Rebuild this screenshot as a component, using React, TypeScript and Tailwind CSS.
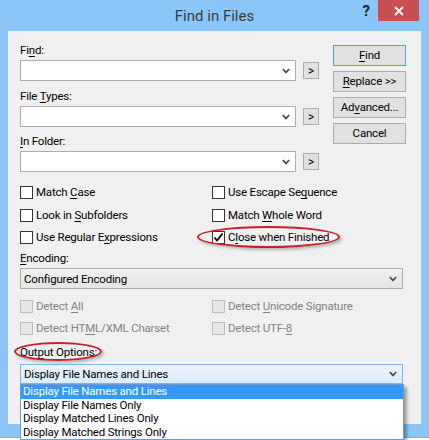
import React from "react";

function M({ t, k }: { t: string; k: number }) {
  if (k < 0) return <>{t}</>;
  return (
    <>
      {t.slice(0, k)}
      <span className="underline underline-offset-[2px] decoration-[1px]">{t[k]}</span>
      {t.slice(k + 1)}
    </>
  );
}

function Chevron() {
  return (
    <svg width="8" height="6" viewBox="0 0 8 6" className="shrink-0">
      <path d="M0.8 1 L4 4.4 L7.2 1" fill="none" stroke="#4a4a4a" strokeWidth="1.7" />
    </svg>
  );
}

function Combo({ w, children, variant = "edit", h = "h-[21px]" }: { w: string; children?: React.ReactNode; variant?: "edit" | "ro" | "focus"; h?: string }) {
  const cls =
    variant === "edit"
      ? "bg-white border-[#abadb3]"
      : variant === "ro"
      ? "bg-gradient-to-b from-[#f0f0f0] to-[#e5e5e5] border-[#acacac]"
      : "bg-gradient-to-b from-[#ecf4fc] to-[#dcecfc] border-[#7eb4ea]";
  return (
    <div className={`${w} ${h} border ${cls} flex items-center pl-[3px] pr-[5px]`}>
      <div className="flex-1 leading-[14px] whitespace-nowrap">{children}</div>
      <Chevron />
    </div>
  );
}

function Arrow() {
  return (
    <div className="ml-[7px] w-[16px] h-[17px] bg-[#e1e1e1] border border-[#adadad] flex items-center justify-center leading-none text-[12px]">
      &gt;
    </div>
  );
}

function Btn({ children, def }: { children: React.ReactNode; def?: boolean }) {
  return (
    <div
      className={`w-[73px] h-[21px] flex items-center justify-center bg-[#e1e1e1] border ${
        def ? "border-[#569de5]" : "border-[#adadad]"
      } whitespace-nowrap`}
    >
      {children}
    </div>
  );
}

function Check({ children, checked, disabled }: { children: React.ReactNode; checked?: boolean; disabled?: boolean }) {
  return (
    <div className="flex items-center">
      <div
        className={`w-[13px] h-[13px] border flex items-center justify-center ${
          disabled ? "bg-[#e6e6e6] border-[#bcbcbc]" : "bg-white border-[#333333]"
        }`}
      >
        {checked && (
          <svg width="11" height="11" viewBox="0 0 11 11">
            <path d="M1.5 5.5 L4 8.5 L9.5 1.5" fill="none" stroke="#000" strokeWidth="1.8" />
          </svg>
        )}
      </div>
      <span className={`ml-[3px] whitespace-nowrap ${disabled ? "text-[#838383]" : "text-black"}`}>{children}</span>
    </div>
  );
}

export default function App() {
  return (
    <div className="w-[429px] h-[440px] bg-white text-[11.5px] tracking-[-0.2px] text-black [font-family:Roboto,'Liberation_Sans',sans-serif] leading-[15px]">
      <div className="h-[438px] bg-[#8cc6f8] border-b border-[#6fb0ec] flex flex-col">
        {/* title bar */}
        <div className="h-[31px] grid grid-cols-[1fr_auto_1fr] tracking-normal">
          <div />
          <div className="pt-[7px] text-[15px] leading-[18px] text-[#3a3a3a]">Find in Files</div>
          <div className="flex justify-end items-start pr-[10px]">
            <div className="mt-[2px] mr-[8px] text-[15px] leading-[18px] font-bold text-[#222]">?</div>
            <div className="w-[41px] h-[21px] bg-[#c75050] flex items-center justify-center">
              <svg width="10" height="10" viewBox="0 0 10 10">
                <path d="M1 1 L9 9 M9 1 L1 9" stroke="#fff" strokeWidth="1.8" />
              </svg>
            </div>
          </div>
        </div>

        {/* client */}
        <div className="mx-[8px] h-[393px] bg-[#f0f0f0] flex flex-col">
          <div className="flex pl-[12px] pt-[12px]">
            <div className="w-[299px] flex flex-col">
              <div className="h-[15px]"><M t="Find:" k={2} /></div>
              <div className="mt-[2px] flex items-center">
                <Combo w="w-[276px]" />
                <Arrow />
              </div>
              <div className="mt-[8px] h-[15px]"><M t="File Types:" k={5} /></div>
              <div className="mt-[2px] flex items-center">
                <Combo w="w-[276px]" />
                <Arrow />
              </div>
              <div className="mt-[7px] h-[15px]"><M t="In Folder:" k={0} /></div>
              <div className="mt-[2px] flex items-center">
                <Combo w="w-[276px]" />
                <Arrow />
              </div>
            </div>
            <div className="ml-[14px] mt-[2px] flex flex-col gap-[5px]">
              <Btn def><M t="Find" k={0} /></Btn>
              <Btn><M t="Replace >>" k={0} /></Btn>
              <Btn><M t="Advanced..." k={2} /></Btn>
              <Btn>Cancel</Btn>
            </div>
          </div>

          <div className="pl-[12px] mt-[9px] grid grid-cols-[192px_1fr]">
            <div className="h-[23px] flex items-center"><Check><M t="Match Case" k={6} /></Check></div>
            <div className="h-[23px] flex items-center"><Check><M t="Use Escape Sequence" k={13} /></Check></div>
            <div className="h-[22px] flex items-center"><Check><M t="Look in Subfolders" k={8} /></Check></div>
            <div className="h-[22px] flex items-center"><Check><M t="Match Whole Word" k={6} /></Check></div>
            <div className="h-[22px] flex items-center"><Check><M t="Use Regular Expressions" k={13} /></Check></div>
            <div className="h-[22px] flex items-center">
              <div className="relative">
                <Check checked><M t="Close when Finished" k={1} /></Check>
                <div className="absolute left-[-15px] top-[-4px] w-[143px] h-[22px] rounded-[50%] border-2 border-[#c4232b] shadow-[2px_2px_3px_rgba(0,0,0,0.25)] pointer-events-none" />
              </div>
            </div>
          </div>

          <div className="pl-[12px] mt-[3px] h-[15px]"><M t="Encoding:" k={0} /></div>
          <div className="pl-[12px] mt-[2px]">
            <Combo w="w-[383px]" variant="ro">Configured Encoding</Combo>
          </div>

          <div className="pl-[12px] mt-[6px] grid grid-cols-[192px_1fr]">
            <div className="h-[22px] flex items-center"><Check disabled><M t="Detect All" k={7} /></Check></div>
            <div className="h-[22px] flex items-center"><Check disabled><M t="Detect Unicode Signature" k={7} /></Check></div>
            <div className="h-[22px] flex items-center"><Check disabled><M t="Detect HTML/XML Charset" k={9} /></Check></div>
            <div className="h-[22px] flex items-center"><Check disabled><M t="Detect UTF-8" k={11} /></Check></div>
          </div>

          <div className="pl-[12px] mt-[6px] h-[15px] flex">
            <div className="relative">
              <M t="Output Options:" k={3} />
              <div className="absolute left-[-6px] top-[-3px] w-[88px] h-[19px] rounded-[50%] border-2 border-[#c4232b] shadow-[2px_2px_3px_rgba(0,0,0,0.25)] pointer-events-none" />
            </div>
          </div>
          <div className="pl-[12px] mt-[4px]">
            <div className="relative w-[383px]">
              <Combo w="w-[383px]" h="h-[20px]" variant="focus">Display File Names and Lines</Combo>
              <div className="absolute left-0 top-full w-[384px] bg-white border border-[#6a9bd6] shadow-[3px_3px_3px_rgba(0,0,0,0.35)] z-10">
                <div className="h-[13.5px] leading-[13.5px] pl-[2px] bg-[#3399ff] text-white">Display File Names and Lines</div>
                <div className="h-[13.5px] leading-[13.5px] pl-[2px]">Display File Names Only</div>
                <div className="h-[13.5px] leading-[13.5px] pl-[2px]">Display Matched Lines Only</div>
                <div className="h-[13.5px] leading-[13.5px] pl-[2px]">Display Matched Strings Only</div>
              </div>
            </div>
          </div>
        </div>
      </div>
    </div>
  );
}
